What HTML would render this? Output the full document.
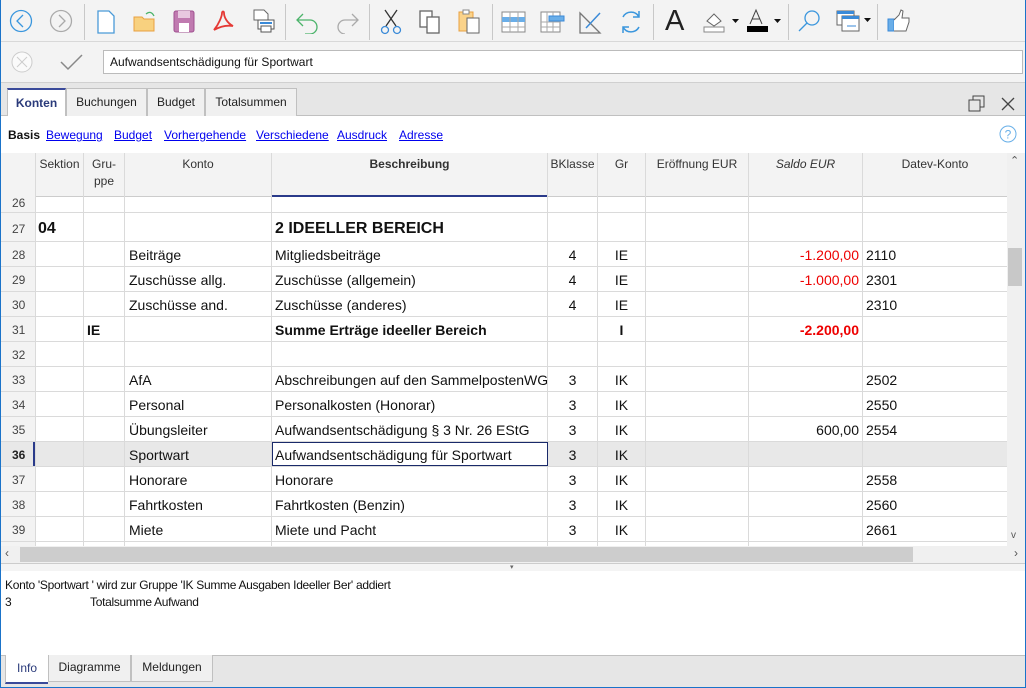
<!DOCTYPE html>
<html><head><meta charset="utf-8"><style>
*{box-sizing:border-box;margin:0;padding:0}
body{width:1026px;height:688px;overflow:hidden;background:#f0f0f0;font-family:"Liberation Sans",Arial,sans-serif;position:relative}
.a{position:absolute}
.win{position:absolute;left:0;top:0;width:1026px;height:688px;border:1px solid #1a73c9;border-top:none}
.tb{left:1px;top:0;width:1024px;height:42px;background:#f3f3f3;border-bottom:1px solid #d8d8d8}
.sep{position:absolute;top:4px;width:1px;height:36px;background:#c8c8c8}
.fb{left:1px;top:42px;width:1024px;height:41px;background:#f3f3f3;border-bottom:1px solid #d0d0d0}
.tabs{left:1px;top:83px;width:1024px;height:33px;background:#e6e6e6;border-bottom:1px solid #c0c0c0}
.tab{position:absolute;top:88px;height:28px;border:1px solid #c0c0c0;border-bottom:none;background:#f0f0f0;font-size:12px;line-height:27px;text-align:center;color:#222}
.links{left:1px;top:116px;width:1024px;height:37px;background:#fff}
.links span{position:absolute;top:12px;font-size:12px;color:#0000ee;text-decoration:underline}
.grid{left:1px;top:153px;width:1006px;height:393px;background:#fff;overflow:hidden}
.c{position:absolute;font-size:14px;color:#111;white-space:nowrap;overflow:hidden}
.vl{position:absolute;top:0;width:1px;height:393px;background:#dadada}
.hl{position:absolute;left:0;width:1006px;height:1px;background:#dadada}
.hd{position:absolute;top:4px;font-size:12px;color:#333;text-align:center}
.rn{position:absolute;left:0;width:34px;padding-left:11px;font-size:12px;color:#444}
.red{color:#e00}
</style></head><body>
<div class="win"></div>
<div class="a tb">
 <svg class="a" style="left:8px;top:9px" width="24" height="24"><circle cx="12" cy="12" r="10.5" fill="none" stroke="#3a96dd" stroke-width="1.3"/><path d="M14 6l-6 6 6 6" fill="none" stroke="#3a96dd" stroke-width="1.3"/></svg>
 <svg class="a" style="left:48px;top:9px" width="24" height="24"><circle cx="12" cy="12" r="10.5" fill="none" stroke="#aaa" stroke-width="1.3"/><path d="M10 6l6 6-6 6" fill="none" stroke="#aaa" stroke-width="1.3"/></svg>
 <div class="sep" style="left:83px"></div>
 <svg class="a" style="left:95px;top:10px" width="20" height="24"><path d="M2 1h11l5 5v17H2z" fill="#fff" stroke="#4a9ad8" stroke-width="1.3"/></svg>
 <svg class="a" style="left:131px;top:9px" width="26" height="24"><path d="M2 8h8l2 2h10v12H2z" fill="#f8d17f" stroke="#e8a040"/><path d="M14 5q5-4 8 2" fill="none" stroke="#4bb36a" stroke-width="1.3"/></svg>
 <svg class="a" style="left:171px;top:10px" width="24" height="24"><rect x="2" y="1" width="20" height="21" rx="2" fill="#c07ab0" stroke="#a05090"/><rect x="6" y="1" width="12" height="7" fill="#e8c8e0"/><rect x="7" y="13" width="10" height="9" fill="#fff"/></svg>
 <svg class="a" style="left:210px;top:10px" width="24" height="24"><path d="M3 20C8 14 11 6 11 3c0-2 2-2 2 0 0 4 3 10 9 13-6-1-12 0-19 4z" fill="none" stroke="#e53935" stroke-width="1.8"/></svg>
 <svg class="a" style="left:249px;top:9px" width="26" height="26"><path d="M4 1h10l4 4v6H4z" fill="#fff" stroke="#666"/><rect x="8" y="11" width="16" height="9" fill="#fff" stroke="#555"/><rect x="11" y="17" width="10" height="6" fill="#fff" stroke="#555"/><rect x="10" y="13" width="12" height="2" fill="#3a8ad8"/></svg>
 <div class="sep" style="left:284px"></div>
 <svg class="a" style="left:294px;top:10px" width="26" height="24"><path d="M3 10h12a7 7 0 0 1 0 14H10M8 4L2 10l6 6" fill="none" stroke="#4bb36a" stroke-width="1.3"/></svg>
 <svg class="a" style="left:333px;top:10px" width="26" height="24"><path d="M23 10H11a7 7 0 0 0 0 14M18 4l6 6-6 6" fill="none" stroke="#aaa" stroke-width="1.3"/></svg>
 <div class="sep" style="left:368px"></div>
 <svg class="a" style="left:378px;top:9px" width="24" height="26"><path d="M6 1l11 16M18 1L7 17" stroke="#333" stroke-width="1.3"/><circle cx="6" cy="21" r="3.5" fill="none" stroke="#3a8ad8" stroke-width="1.3"/><circle cx="18" cy="21" r="3.5" fill="none" stroke="#3a8ad8" stroke-width="1.3"/></svg>
 <svg class="a" style="left:416px;top:9px" width="26" height="26"><rect x="3" y="2" width="12" height="16" fill="#fff" stroke="#666" stroke-width="1.3"/><rect x="10" y="8" width="12" height="16" fill="#fff" stroke="#666" stroke-width="1.3"/></svg>
 <svg class="a" style="left:455px;top:8px" width="26" height="26"><rect x="3" y="4" width="14" height="19" fill="#fbd38a" stroke="#e8a040"/><rect x="7" y="2" width="6" height="4" fill="#fff" stroke="#888"/><rect x="11" y="10" width="12" height="15" fill="#fff" stroke="#666"/></svg>
 <div class="sep" style="left:491px"></div>
 <svg class="a" style="left:500px;top:10px" width="26" height="24"><rect x="1" y="2" width="23" height="20" fill="#fff" stroke="#888"/><rect x="1" y="7" width="23" height="5" fill="#6aaee8"/><path d="M1 17h23M9 2v20M17 2v20" stroke="#aaa"/></svg>
 <svg class="a" style="left:538px;top:10px" width="26" height="24"><rect x="2" y="2" width="19" height="20" fill="#fff" stroke="#888"/><path d="M2 12h19M2 17h19M8 2v20M14 2v20" stroke="#aaa"/><rect x="10" y="6" width="15" height="5" fill="#6aaee8" stroke="#3a8ad8"/></svg>
 <svg class="a" style="left:577px;top:10px" width="26" height="24"><path d="M2 3v20h20z" fill="none" stroke="#777" stroke-width="1.3"/><path d="M8 18L22 3" stroke="#3a8ad8" stroke-width="1.5"/></svg>
 <svg class="a" style="left:617px;top:9px" width="26" height="26"><path d="M21 8a9 9 0 0 0-16 0M5 18a9 9 0 0 0 16 0M21 2v6h-6M5 24v-6h6" fill="none" stroke="#3a96dd" stroke-width="1.5"/></svg>
 <div class="sep" style="left:652px"></div>
 <div class="a" style="left:664px;top:5px;font-size:29px;color:#222;font-weight:300">A</div>
 <svg class="a" style="left:701px;top:9px" width="40" height="26"><path d="M5 12l7-7 7 7-7 5z" fill="#fff" stroke="#666"/><rect x="2" y="18" width="20" height="5" fill="#fff" stroke="#888"/><path d="M30 10h7l-3.5 4z" fill="#111"/></svg>
 <svg class="a" style="left:745px;top:8px" width="42" height="26"><path d="M4 16L10 2l6 14M6 11h8" fill="none" stroke="#444"/><rect x="1" y="18" width="21" height="6" fill="#000"/><path d="M28 11h7l-3.5 4z" fill="#111"/></svg>
 <div class="sep" style="left:787px"></div>
 <svg class="a" style="left:796px;top:9px" width="26" height="24"><circle cx="15" cy="9" r="7" fill="none" stroke="#3a96dd" stroke-width="1.3"/><path d="M10 14l-8 8" stroke="#3a96dd" stroke-width="1.3"/></svg>
 <svg class="a" style="left:834px;top:9px" width="40" height="26"><rect x="2" y="2" width="17" height="14" fill="#fff" stroke="#666"/><rect x="2" y="2" width="17" height="3" fill="#3a8ad8"/><rect x="7" y="7" width="17" height="15" fill="#fff" stroke="#666"/><rect x="7" y="7" width="17" height="3" fill="#3a8ad8"/><path d="M12 17h9" stroke="#3a8ad8"/><path d="M29 9h7l-3.5 4z" fill="#111"/></svg>
 <div class="sep" style="left:876px"></div>
 <svg class="a" style="left:884px;top:8px" width="28" height="26"><rect x="3" y="11" width="6" height="12" fill="#6aaee8" stroke="#3a8ad8"/><path d="M9 12l5-5 2-5 2 1-1 7h7v4l-3 9H9" fill="#fff" stroke="#666"/></svg>
</div>
<div class="a fb">
 <svg class="a" style="left:10px;top:9px" width="22" height="22"><circle cx="11" cy="11" r="10" fill="#fafafa" stroke="#ccc"/><path d="M6 6l10 10M16 6L6 16" stroke="#ccc"/></svg>
 <svg class="a" style="left:58px;top:10px" width="26" height="20"><path d="M2 10l7 7L23 3" fill="none" stroke="#888" stroke-width="1.5"/></svg>
 <div class="a" style="left:102px;top:8px;width:920px;height:24px;background:#fff;border:1px solid #bbb;font-size:12px;line-height:22px;padding-left:6px;color:#111">Aufwandsentschädigung für Sportwart</div>
</div>
<div class="a tabs"></div>
<div class="tab" style="left:7px;width:59px;background:#fff;border-top:2px solid #3a4a9a;font-weight:bold;color:#2a3a7a;height:29px">Konten</div>
<div class="tab" style="left:66px;width:81px">Buchungen</div>
<div class="tab" style="left:147px;width:58px">Budget</div>
<div class="tab" style="left:205px;width:92px">Totalsummen</div>
<svg class="a" style="left:968px;top:95px" width="18" height="18"><rect x="1" y="5" width="11" height="11" fill="none" stroke="#444"/><path d="M5 5V1h11v11h-4" fill="none" stroke="#444"/></svg>
<svg class="a" style="left:999px;top:95px" width="18" height="18"><path d="M3 3l12 12M15 3L3 15" stroke="#444" stroke-width="1.3"/></svg>
<div class="a links">
 <span style="left:7px;color:#111;text-decoration:none;font-weight:bold">Basis</span>
 <span style="left:45px">Bewegung</span><span style="left:113px">Budget</span><span style="left:163px">Vorhergehende</span><span style="left:255px">Verschiedene</span><span style="left:336px">Ausdruck</span><span style="left:398px">Adresse</span>
 <svg class="a" style="left:997px;top:8px" width="20" height="20"><circle cx="10" cy="10" r="8" fill="none" stroke="#6ab0e8"/><text x="10" y="14.5" font-size="12" text-anchor="middle" fill="#6ab0e8" font-family="Liberation Sans">?</text></svg>
</div>
<div class="a grid">
 <div class="a" style="left:0;top:0;width:1006px;height:44px;background:#f3f3f3;border-bottom:1px solid #ccc"></div>
 <div class="a" style="left:0;top:0;width:34px;height:393px;background:#f3f3f3"></div>
 <div class="a" style="left:0;top:288px;width:1006px;height:25px;background:#e8e8e8"></div>
 <div class="a" style="left:271px;top:42px;width:276px;height:2px;background:#2a3a8a"></div>
 <div class="vl" style="left:34px"></div><div class="vl" style="left:82px"></div><div class="vl" style="left:123px"></div><div class="vl" style="left:270px"></div><div class="vl" style="left:546px"></div><div class="vl" style="left:596px"></div><div class="vl" style="left:644px"></div><div class="vl" style="left:747px"></div><div class="vl" style="left:861px"></div>
 <div class="hl" style="top:59px"></div><div class="hl" style="top:88px"></div><div class="hl" style="top:113px"></div><div class="hl" style="top:138px"></div><div class="hl" style="top:163px"></div><div class="hl" style="top:188px"></div><div class="hl" style="top:213px"></div><div class="hl" style="top:238px"></div><div class="hl" style="top:263px"></div><div class="hl" style="top:288px"></div><div class="hl" style="top:313px"></div><div class="hl" style="top:338px"></div><div class="hl" style="top:363px"></div><div class="hl" style="top:388px"></div>
 <div class="hd" style="left:35px;width:47px">Sektion</div>
 <div class="hd" style="left:83px;width:40px;line-height:17px;top:3px">Gru-<br>ppe</div>
 <div class="hd" style="left:124px;width:146px">Konto</div>
 <div class="hd" style="left:271px;width:275px;font-weight:bold">Beschreibung</div>
 <div class="hd" style="left:547px;width:49px">BKlasse</div>
 <div class="hd" style="left:597px;width:47px">Gr</div>
 <div class="hd" style="left:645px;width:102px">Eröffnung EUR</div>
 <div class="hd" style="left:748px;width:113px;font-style:italic">Saldo EUR</div>
 <div class="hd" style="left:862px;width:144px">Datev-Konto</div>
 <div class="rn" style="top:43px">26</div>
 <div class="rn" style="top:69px">27</div>
 <div class="c" style="left:37px;top:67px;font-size:16px;font-weight:bold">04</div>
 <div class="c" style="left:274px;top:67px;font-size:16px;font-weight:bold">2 IDEELLER BEREICH</div>
 <div class="rn" style="top:95px">28</div><div class="c" style="left:128px;top:94px">Beiträge</div><div class="c" style="left:274px;top:94px">Mitgliedsbeiträge</div><div class="c" style="left:547px;width:49px;text-align:center;top:94px">4</div><div class="c" style="left:597px;width:47px;text-align:center;top:94px">IE</div><div class="c red" style="left:748px;width:110px;text-align:right;top:94px">-1.200,00</div><div class="c" style="left:865px;top:94px">2110</div>
 <div class="rn" style="top:120px">29</div><div class="c" style="left:128px;top:119px">Zuschüsse allg.</div><div class="c" style="left:274px;top:119px">Zuschüsse (allgemein)</div><div class="c" style="left:547px;width:49px;text-align:center;top:119px">4</div><div class="c" style="left:597px;width:47px;text-align:center;top:119px">IE</div><div class="c red" style="left:748px;width:110px;text-align:right;top:119px">-1.000,00</div><div class="c" style="left:865px;top:119px">2301</div>
 <div class="rn" style="top:145px">30</div><div class="c" style="left:128px;top:144px">Zuschüsse and.</div><div class="c" style="left:274px;top:144px">Zuschüsse (anderes)</div><div class="c" style="left:547px;width:49px;text-align:center;top:144px">4</div><div class="c" style="left:597px;width:47px;text-align:center;top:144px">IE</div><div class="c" style="left:865px;top:144px">2310</div>
 <div class="rn" style="top:170px">31</div><div class="c" style="left:86px;top:169px;font-weight:bold">IE</div><div class="c" style="left:274px;top:169px;font-weight:bold">Summe Erträge ideeller Bereich</div><div class="c" style="left:597px;width:47px;text-align:center;top:169px;font-weight:bold">I</div><div class="c red" style="left:748px;width:110px;text-align:right;top:169px;font-weight:bold">-2.200,00</div>
 <div class="rn" style="top:195px">32</div>
 <div class="rn" style="top:220px">33</div><div class="c" style="left:128px;top:219px">AfA</div><div class="c" style="left:274px;top:219px;width:272px">Abschreibungen auf den SammelpostenWG</div><div class="c" style="left:547px;width:49px;text-align:center;top:219px">3</div><div class="c" style="left:597px;width:47px;text-align:center;top:219px">IK</div><div class="c" style="left:865px;top:219px">2502</div>
 <div class="rn" style="top:245px">34</div><div class="c" style="left:128px;top:244px">Personal</div><div class="c" style="left:274px;top:244px">Personalkosten (Honorar)</div><div class="c" style="left:547px;width:49px;text-align:center;top:244px">3</div><div class="c" style="left:597px;width:47px;text-align:center;top:244px">IK</div><div class="c" style="left:865px;top:244px">2550</div>
 <div class="rn" style="top:270px">35</div><div class="c" style="left:128px;top:269px">Übungsleiter</div><div class="c" style="left:274px;top:269px">Aufwandsentschädigung § 3 Nr. 26 EStG</div><div class="c" style="left:547px;width:49px;text-align:center;top:269px">3</div><div class="c" style="left:597px;width:47px;text-align:center;top:269px">IK</div><div class="c" style="left:748px;width:110px;text-align:right;top:269px">600,00</div><div class="c" style="left:865px;top:269px">2554</div>
 <div class="a" style="left:32px;top:289px;width:2px;height:24px;background:#2a3a8a"></div>
 <div class="rn" style="top:295px;font-weight:bold;color:#222">36</div><div class="c" style="left:128px;top:294px">Sportwart</div>
 <div class="a" style="left:271px;top:289px;width:276px;height:24px;background:#fff;border:1px solid #1a2a6a"></div>
 <div class="c" style="left:274px;top:294px">Aufwandsentschädigung für Sportwart</div><div class="c" style="left:547px;width:49px;text-align:center;top:294px">3</div><div class="c" style="left:597px;width:47px;text-align:center;top:294px">IK</div>
 <div class="rn" style="top:320px">37</div><div class="c" style="left:128px;top:319px">Honorare</div><div class="c" style="left:274px;top:319px">Honorare</div><div class="c" style="left:547px;width:49px;text-align:center;top:319px">3</div><div class="c" style="left:597px;width:47px;text-align:center;top:319px">IK</div><div class="c" style="left:865px;top:319px">2558</div>
 <div class="rn" style="top:345px">38</div><div class="c" style="left:128px;top:344px">Fahrtkosten</div><div class="c" style="left:274px;top:344px">Fahrtkosten (Benzin)</div><div class="c" style="left:547px;width:49px;text-align:center;top:344px">3</div><div class="c" style="left:597px;width:47px;text-align:center;top:344px">IK</div><div class="c" style="left:865px;top:344px">2560</div>
 <div class="rn" style="top:370px">39</div><div class="c" style="left:128px;top:369px">Miete</div><div class="c" style="left:274px;top:369px">Miete und Pacht</div><div class="c" style="left:547px;width:49px;text-align:center;top:369px">3</div><div class="c" style="left:597px;width:47px;text-align:center;top:369px">IK</div><div class="c" style="left:865px;top:369px">2661</div>
</div>
<div class="a" style="left:1007px;top:153px;width:18px;height:393px;background:#f0f0f0"></div>
<div class="a" style="left:1008px;top:248px;width:14px;height:38px;background:#c8c8c8"></div>
<div class="a" style="left:1010px;top:154px;font-size:11px;color:#555">&#8963;</div>
<div class="a" style="left:1011px;top:530px;font-size:10px;color:#555">v</div>
<div class="a" style="left:1px;top:546px;width:1024px;height:17px;background:#f0f0f0"></div>
<div class="a" style="left:20px;top:547px;width:893px;height:15px;background:#cdcdcd"></div>
<div class="a" style="left:5px;top:546px;font-size:12px;color:#555">‹</div>
<div class="a" style="left:1014px;top:546px;font-size:12px;color:#555">›</div>
<div class="a" style="left:1px;top:563px;width:1024px;height:8px;background:#f4f4f4;border-top:1px solid #ccc"></div>
<div class="a" style="left:510px;top:563px;font-size:7px;color:#666">▾</div>
<div class="a" style="left:1px;top:571px;width:1024px;height:84px;background:#fff;font-size:12px;color:#111;letter-spacing:-0.3px">
 <div class="a" style="left:4px;top:7px">Konto 'Sportwart ' wird zur Gruppe 'IK Summe Ausgaben Ideeller Ber' addiert</div>
 <div class="a" style="left:4px;top:24px">3</div><div class="a" style="left:89px;top:24px">Totalsumme Aufwand</div>
</div>
<div class="a" style="left:1px;top:655px;width:1024px;height:32px;background:#e6e6e6;border-top:1px solid #c0c0c0"></div>
<div class="a" style="left:5px;top:655px;width:43px;height:29px;background:#fff;border-left:1px solid #c0c0c0;border-bottom:2px solid #3a4a9a;font-size:12px;line-height:26px;text-align:center;color:#2a3a7a">Info</div>
<div class="a" style="left:48px;top:655px;width:83px;height:27px;background:#f0f0f0;border:1px solid #c0c0c0;border-top:none;font-size:12px;line-height:24px;text-align:center;color:#222">Diagramme</div>
<div class="a" style="left:131px;top:655px;width:82px;height:27px;background:#f0f0f0;border:1px solid #c0c0c0;border-top:none;font-size:12px;line-height:24px;text-align:center;color:#222">Meldungen</div>
</body></html>
